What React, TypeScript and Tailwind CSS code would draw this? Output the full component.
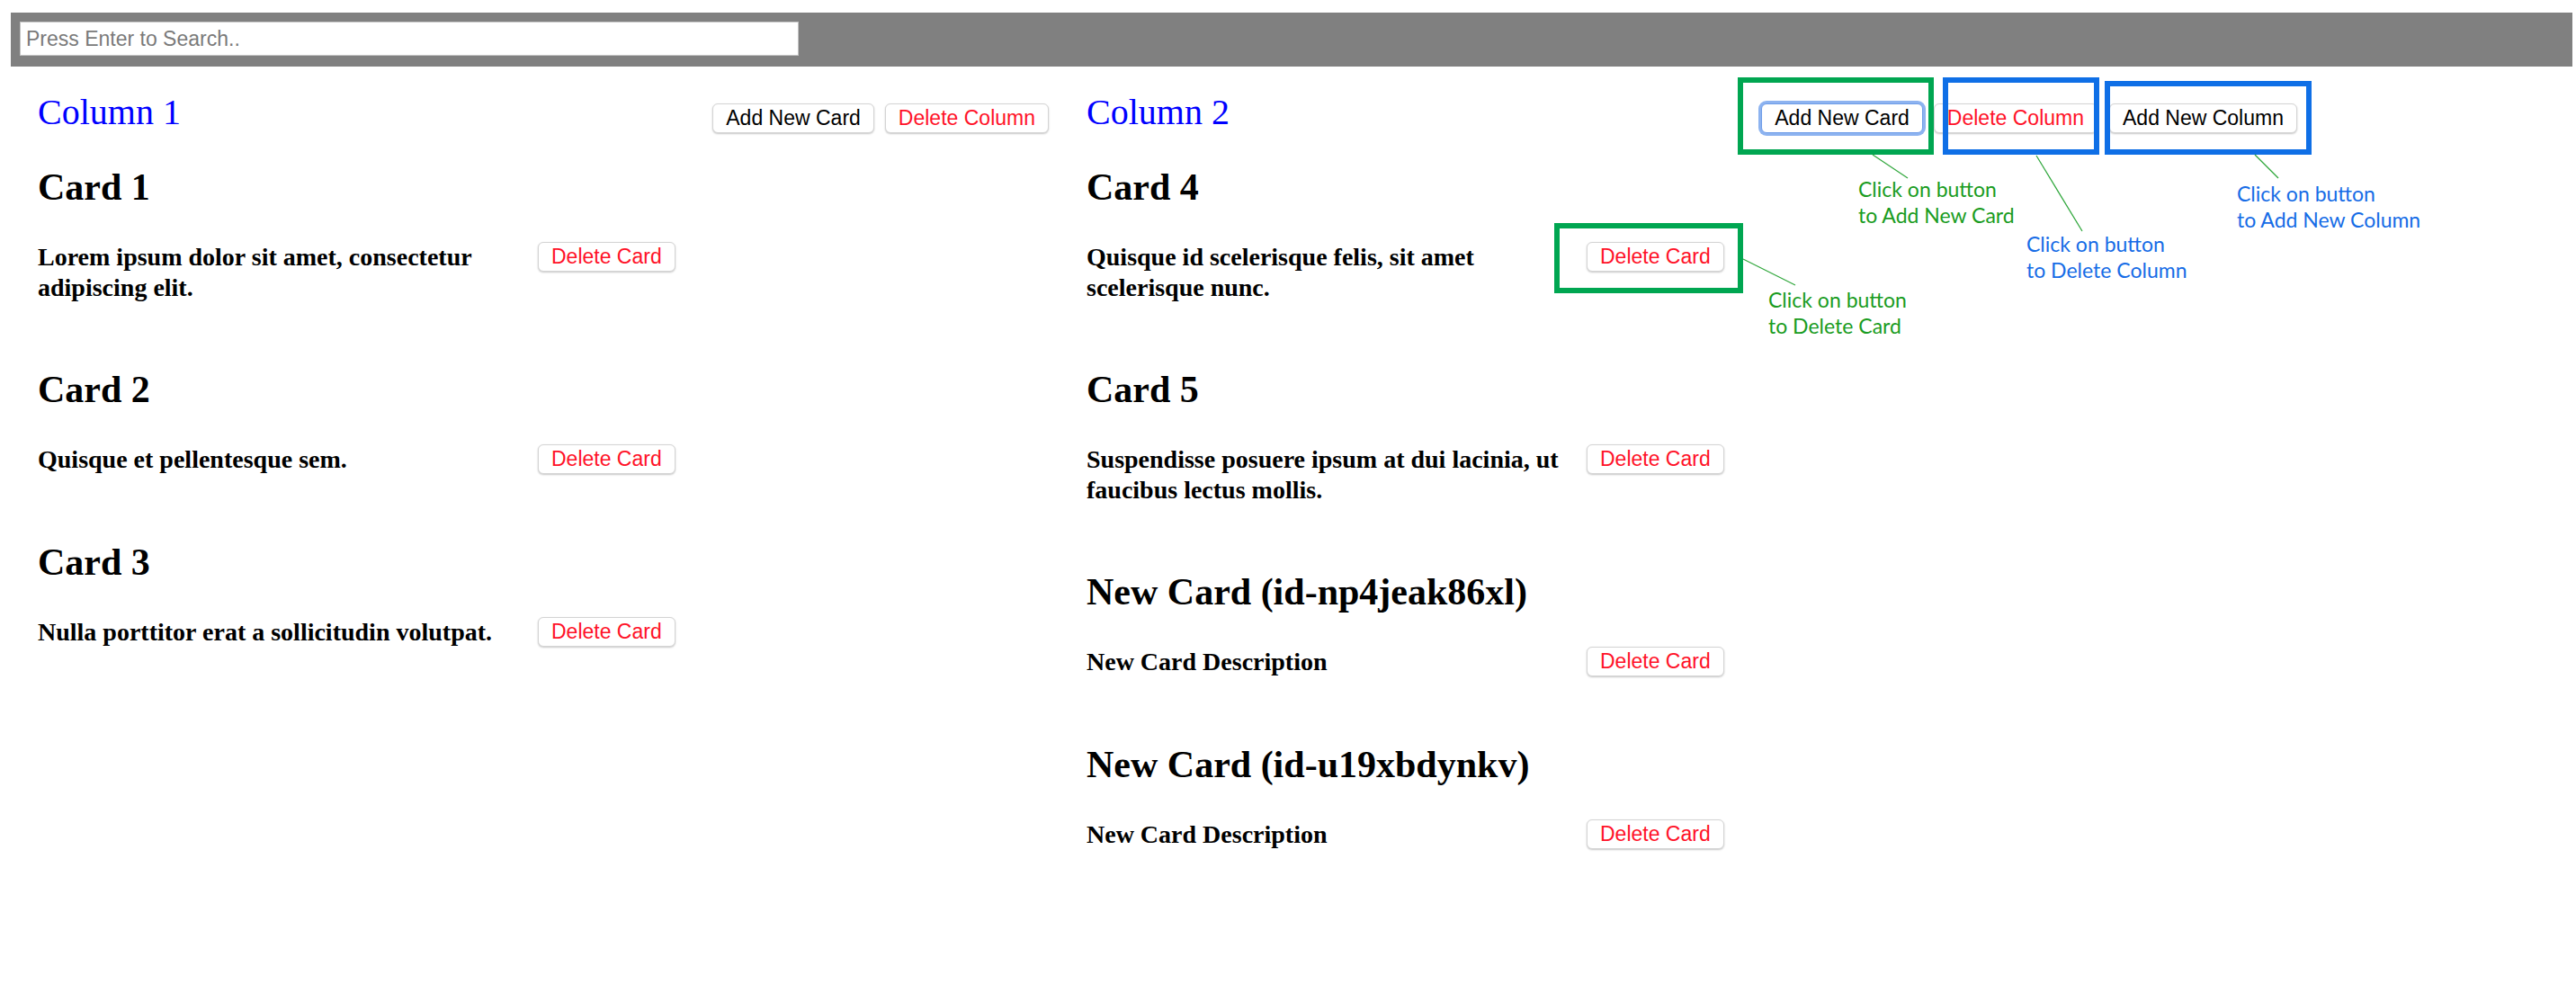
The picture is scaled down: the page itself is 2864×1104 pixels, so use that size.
import clsx from 'clsx';

type Card = { id: string; title: string; description: string };
type Column = { id: string; title: string; cards: Card[] };

const columns: Column[] = [
  {
    id: 'col-1',
    title: 'Column 1',
    cards: [
      { id: 'c1', title: 'Card 1', description: 'Lorem ipsum dolor sit amet, consectetur adipiscing elit.' },
      { id: 'c2', title: 'Card 2', description: 'Quisque et pellentesque sem.' },
      { id: 'c3', title: 'Card 3', description: 'Nulla porttitor erat a sollicitudin volutpat.' },
    ],
  },
  {
    id: 'col-2',
    title: 'Column 2',
    cards: [
      { id: 'c4', title: 'Card 4', description: 'Quisque id scelerisque felis, sit amet scelerisque nunc.' },
      { id: 'c5', title: 'Card 5', description: 'Suspendisse posuere ipsum at dui lacinia, ut faucibus lectus mollis.' },
      { id: 'np4jeak86xl', title: 'New Card (id-np4jeak86xl)', description: 'New Card Description' },
      { id: 'u19xbdynkv', title: 'New Card (id-u19xbdynkv)', description: 'New Card Description' },
    ],
  },
];

function Button({
  children,
  danger,
  focused,
  className,
}: {
  children: React.ReactNode;
  danger?: boolean;
  focused?: boolean;
  className?: string;
}) {
  return (
    <button
      className={clsx(
        "h-[33px] shrink-0 rounded-[6px] border bg-white px-[14px] font-['Liberation_Sans',Arial,sans-serif] text-[23px] leading-none",
        danger ? 'text-[#ff1228]' : 'text-black',
        focused
          ? 'border-[#6f9de8] shadow-[0_0_0_3px_#8db3f0]'
          : 'border-[#d4d4d4] shadow-[0_1px_2px_rgba(0,0,0,0.22)]',
        className
      )}
    >
      {children}
    </button>
  );
}

function ColumnView({ column, focusAdd }: { column: Column; focusAdd?: boolean }) {
  return (
    <div className="w-[1124px] shrink-0 font-['Liberation_Serif','Times_New_Roman',serif]">
      {/* header */}
      <div className="flex items-start justify-between">
        <h1 className="text-[40px] leading-[46px] text-[#0000ff]">{column.title}</h1>
        <div className="mt-[13px] flex gap-[12px]">
          <Button focused={focusAdd}>Add New Card</Button>
          <Button danger>Delete Column</Button>
        </div>
      </div>

      {/* cards */}
      <div className="mt-[36px] flex flex-col gap-[73px]">
        {column.cards.map((card) => (
          <div key={card.id}>
            <h2 className="text-[42px] font-bold leading-[48px] text-black">{card.title}</h2>
            <div className="mt-[37px] flex items-start">
              <p className="w-[556px] shrink-0 text-[28px] font-bold leading-[33.6px] text-black">
                {card.description}
              </p>
              <Button danger>Delete Card</Button>
            </div>
          </div>
        ))}
      </div>
    </div>
  );
}

function Annotations() {
  return (
    <div className="pointer-events-none absolute left-0 top-0 h-[1104px] w-[2864px] font-['Lato','Open_Sans',sans-serif] text-[23px] leading-[29px]">
      {/* boxes */}
      <div className="absolute left-[1932px] top-[86px] h-[86px] w-[218px] border-[6px] border-[#00a651]" />
      <div className="absolute left-[2160px] top-[86px] h-[86px] w-[174px] border-[6px] border-[#0f6fe6]" />
      <div className="absolute left-[2340px] top-[90px] h-[82px] w-[230px] border-[6px] border-[#0f6fe6]" />
      <div className="absolute left-[1728px] top-[248px] h-[78px] w-[210px] border-[6px] border-[#00a651]" />

      {/* leader lines */}
      <svg className="absolute left-0 top-0" width="2864" height="1104">
        <g stroke="#2ea63a" strokeWidth="1.2">
          <line x1="2082" y1="172" x2="2121" y2="198" />
          <line x1="2264" y1="173" x2="2315" y2="257" />
          <line x1="2507" y1="172" x2="2533" y2="198" />
          <line x1="1938" y1="288" x2="1996" y2="317" />
        </g>
      </svg>

      {/* notes */}
      <div className="absolute left-[2066px] top-[196px] text-[#1a9c22]">
        Click on button
        <br />
        to Add New Card
      </div>
      <div className="absolute left-[2253px] top-[257px] text-[#166ce6]">
        Click on button
        <br />
        to Delete Column
      </div>
      <div className="absolute left-[2487px] top-[201px] text-[#166ce6]">
        Click on button
        <br />
        to Add New Column
      </div>
      <div className="absolute left-[1966px] top-[319px] text-[#1a9c22]">
        Click on button
        <br />
        to Delete Card
      </div>
    </div>
  );
}

export default function App() {
  return (
    <div className="relative min-h-[1104px] w-full bg-white pt-[14px]">
      {/* search bar */}
      <div className="ml-[12px] mr-[4px] h-[60px] bg-[#808080] pl-[10px] pt-[10px]">
        <input
          type="text"
          placeholder="Press Enter to Search.."
          className="h-[38px] w-[866px] border border-[#c4c4c4] bg-white px-[6px] font-['Liberation_Sans',Arial,sans-serif] text-[23px] text-black outline-none placeholder:text-[#7a7a7a]"
        />
      </div>

      {/* board */}
      <div className="mt-[28px] flex items-start pl-[42px]">
        <ColumnView column={columns[0]} />
        <div className="ml-[42px]">
          <ColumnView column={columns[1]} focusAdd />
        </div>
        <Button className="ml-[13px] mt-[13px]">Add New Column</Button>
      </div>

      <Annotations />
    </div>
  );
}
